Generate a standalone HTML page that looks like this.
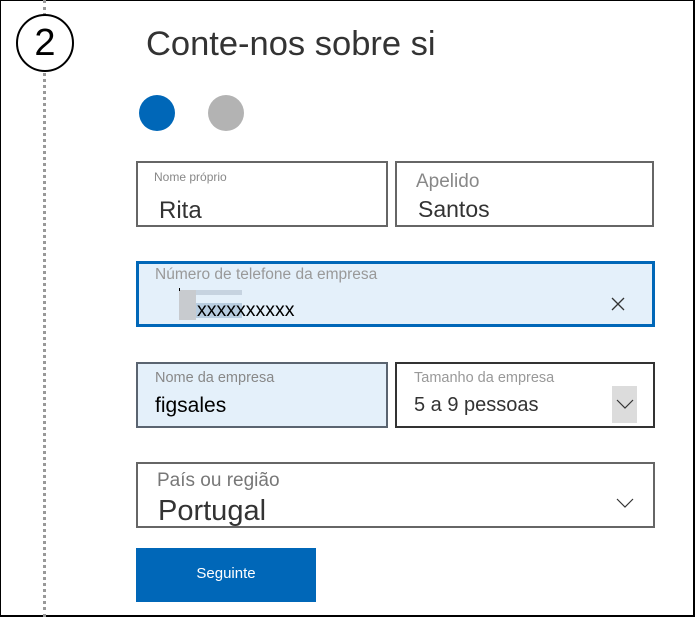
<!DOCTYPE html>
<html><head><style>
*{margin:0;padding:0;box-sizing:border-box}
body{width:695px;height:617px;position:relative;background:#fff;font-family:"Liberation Sans",sans-serif;overflow:hidden}
.frame{position:absolute;left:0;top:0;width:695px;height:617px;border:1px solid #000;border-right-width:2px;border-bottom-width:2px}
.dots{position:absolute;left:43px;top:0;height:617px;border-left:3px dotted #999}
.circ{position:absolute;left:16px;top:14px;width:58px;height:58px;border:2px solid #000;border-radius:50%;background:#fff;font-size:38px;text-align:center;line-height:54px;color:#000}
h1{position:absolute;left:146px;top:25px;font-size:34.5px;font-weight:normal;color:#333}
.dot{position:absolute;top:95px;width:36px;height:36px;border-radius:50%}
.box{position:absolute;border:2px solid #666;background:#fff}
.lab{position:absolute;color:#888;white-space:nowrap}
.val{position:absolute;color:#333;white-space:nowrap}
.btn{position:absolute;left:136px;top:548px;width:180px;height:54px;background:#0067b8;color:#fff;font-size:15px;text-align:center;line-height:52px}
</style></head><body>
<div class="frame"></div>
<div class="dots"></div>
<div class="circ">2</div>
<h1>Conte-nos sobre si</h1>
<div class="dot" style="left:139px;background:#0067b8"></div>
<div class="dot" style="left:208px;background:#b3b3b3"></div>

<div class="box" style="left:136px;top:161px;width:252px;height:66px"></div>
<div class="lab" style="left:154px;top:170px;font-size:12px">Nome próprio</div>
<div class="val" style="left:159px;top:197px;font-size:24px">Rita</div>

<div class="box" style="left:395px;top:161px;width:259px;height:66px"></div>
<div class="lab" style="left:416px;top:171px;font-size:19px">Apelido</div>
<div class="val" style="left:418px;top:196px;font-size:23px">Santos</div>

<div class="box" style="left:136px;top:261px;width:519px;height:66px;border:3px solid #0067b8;background:#e4f0fa"></div>
<div class="lab" style="left:155px;top:266px;font-size:15.5px;color:#999">Número de telefone da empresa</div>
<div style="position:absolute;left:179px;top:290px;width:63px;height:5px;background:#c6d3e0"></div>
<div style="position:absolute;left:179px;top:290px;width:17px;height:30px;background:#c8cbcf"></div>
<div style="position:absolute;left:196px;top:303px;width:46px;height:15px;background:#b8cde0"></div>
<div style="position:absolute;left:179px;top:288px;width:1px;height:3px;background:#000"></div>
<div class="val" style="left:197px;top:299px;font-size:19.5px;color:#000">xxxxxxxxxx</div>
<svg style="position:absolute;left:611px;top:297px" width="14" height="14"><path d="M1 1L13 13M13 1L1 13" stroke="#333" stroke-width="1.3"/></svg>

<div class="box" style="left:136px;top:362px;width:252px;height:66px;border-color:#5a6470;background:#e4f0fa"></div>
<div class="lab" style="left:155px;top:370px;font-size:14.5px">Nome da empresa</div>
<div class="val" style="left:155px;top:394px;font-size:21px;color:#000">figsales</div>

<div class="box" style="left:395px;top:362px;width:260px;height:66px;border-color:#333"></div>
<div class="lab" style="left:414px;top:370px;font-size:14.5px;color:#999">Tamanho da empresa</div>
<div class="val" style="left:414px;top:394px;font-size:20px">5 a 9 pessoas</div>
<div style="position:absolute;left:612px;top:386px;width:25px;height:37px;background:#dcdcdc"></div>
<svg style="position:absolute;left:616px;top:398px" width="18" height="12"><path d="M1 2L9 10L17 2" stroke="#333" fill="none" stroke-width="1.2"/></svg>

<div class="box" style="left:136px;top:462px;width:519px;height:66px"></div>
<div class="lab" style="left:157px;top:470px;font-size:19px;color:#777">País ou região</div>
<div class="val" style="left:158px;top:495px;font-size:29px">Portugal</div>
<svg style="position:absolute;left:616px;top:497px" width="18" height="12"><path d="M1 2L9 10L17 2" stroke="#333" fill="none" stroke-width="1.2"/></svg>

<div class="btn">Seguinte</div>
</body></html>
